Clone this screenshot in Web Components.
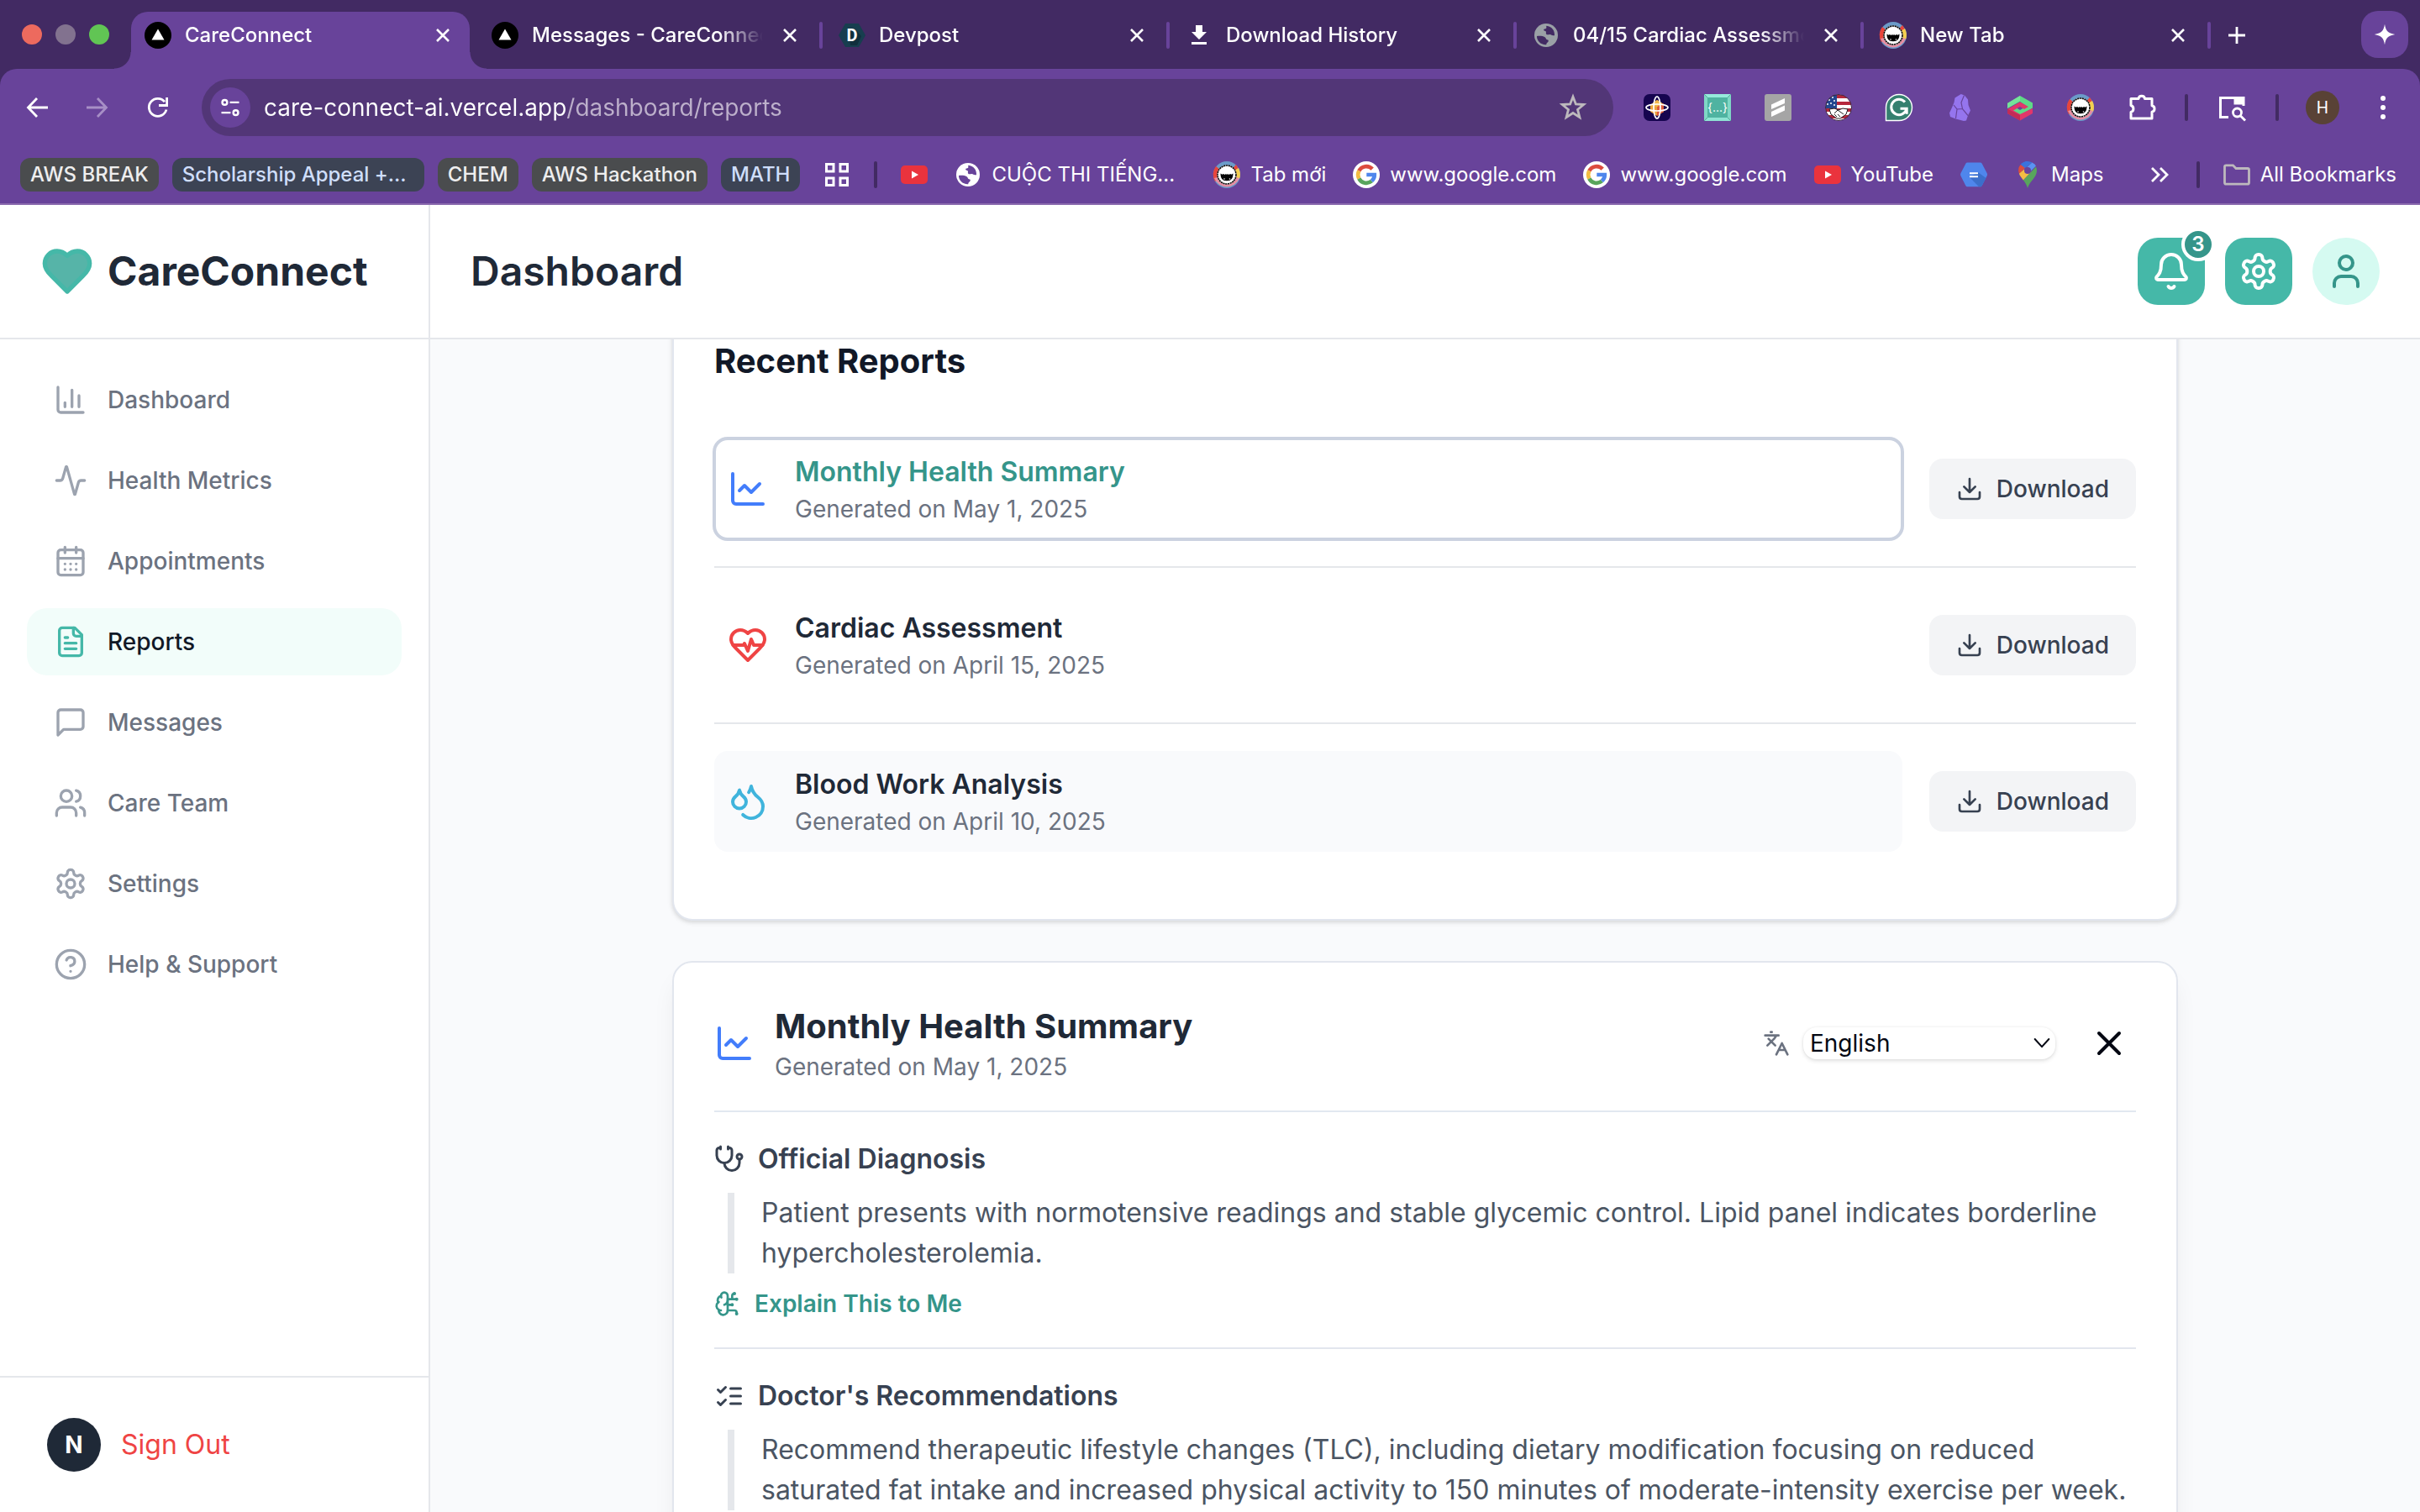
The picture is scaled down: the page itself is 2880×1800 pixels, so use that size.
<!DOCTYPE html>
<html lang="en">
<head>
<meta charset="utf-8">
<title>CareConnect</title>
<style>
  html, body { margin: 0; height: 100%; }
  body {
    display: flex; flex-direction: column; height: 100vh; overflow: hidden;
    font-family: Inter, "Liberation Sans", sans-serif; font-size: 28px; line-height: 40px;
    color: #1f2937; background: #f9fafc;
  }
</style>
</head>
<body>
<browser-chrome></browser-chrome>
<care-app></care-app>

<script>
const G = (body) => ({ vb: '0 0 32 32', body });
const L = (body) => ({ vb: '0 0 24 24', line: true, body });

const face = `
  <circle cx="16" cy="16" r="16" fill="#6b9bc9"/>
  <path d="M16 16 3 6A16 16 0 0 0 2 24Z" fill="#e8453c"/>
  <path d="M16 16 27 4A16 16 0 0 1 30 10Z" fill="#e8453c"/>
  <path d="M16 16 30 8A16 16 0 0 1 31 21Z" fill="#f4cf4f"/>
  <path d="M16 16 31 20A16 16 0 0 1 1 20Z" fill="#e58fa4"/>
  <circle cx="16" cy="16" r="11.500" fill="#fff"/>
  <circle cx="16" cy="16" r="11" fill="#fff" stroke="#0b0b0b" stroke-width="1.600" stroke-dasharray="2.200 .6"/>
  <path d="M8.500 14.500l2 1.200 1.500-.8 1.500 1 1.500-.8 1 .8 1-.8 1.500.8 1.500-1 1.500.8 2-1.200c0 5-1.600 8.800-7.500 8.800s-7.500-3.800-7.500-8.800z" fill="#050505"/>
  <circle cx="13" cy="21" r=".8" fill="#fff"/><circle cx="19.500" cy="21" r=".8" fill="#fff"/>`;
const vercel = `<circle cx="16" cy="16" r="16" fill="#000"/><path d="M16 8.500 23.500 21.500h-15z" fill="#fff"/>`;
const youtube = `<rect y="5" width="32" height="22" rx="5" fill="#ea333d"/><path d="M13 11.500v9l8-4.500z" fill="#fff"/>`;
const google = `
  <circle cx="16" cy="16" r="16" fill="#fff"/>
  <g fill="none" stroke-width="4.600">
    <path d="M7.300 11.400A9.900 9.900 0 0 1 23.200 9.200" stroke="#dc4c3e"/>
    <path d="M7.300 20.600A9.900 9.900 0 0 1 7.300 11.400" stroke="#f3bd42"/>
    <path d="M22.400 23.600A9.900 9.900 0 0 1 7.300 20.600" stroke="#58a55c"/>
    <path d="M16.300 16h9.500A9.900 9.900 0 0 1 22.400 23.600" stroke="#4f86ec"/>
  </g>`;
const globe = (c, h) => `
  <circle cx="16" cy="16" r="14" fill="${c}"/>
  <path d="M5 17c3.500-.6 7-.2 9.500 1.200 1.800 1 1 3 3.500 3.300 1 .2 1 1.700.2 2.500-1.200 1.200-1.700 1.400-2 3.200C9.500 27.500 4.800 22.500 5 17z" fill="${h}"/>
  <path d="M16.500 4.800c-1 1.200.6 1.700-.4 2.900-1 .9-2.800.4-3 1.700-.1 1.600 2 .9 2.700 2.100.6 1.100-.5 2.200.5 3.300 1.300 1.400 3.500-.6 5.200.4 1.500.8 2.500 1.300 4.500 1.100C26.500 10 22.500 5.500 16.500 4.800z" fill="${h}"/>`;

const ICONS = {
  vercel: G(vercel), face: G(face), youtube: G(youtube), google: G(google),
  globeGrey: G(globe('#9aa0a6', '#422a63')), globeWhite: G(globe('#ffffff', '#68439a')),
  devpost: G(`<path d="M8 2h16l8 14-8 14H8L0 16z" fill="#173e4f"/><path d="M12 9h8l7 8-5 11h-8z" fill="#102f3d"/><text x="16" y="23" text-anchor="middle" font-family="Roboto, sans-serif" font-weight="700" font-size="20" fill="#fff">D</text>`),
  saved: G(`<path d="M12 4h8v8h5l-9 9-9-9h5zM7 24h18v3H7z" fill="#fff"/>`),
  close: { vb: '0 0 16 16', body: `<path d="M1 1l14 14M15 1 1 15" fill="none" stroke="#fff" stroke-width="2.600"/>` },
  plus: G(`<path d="M16 6v20M6 16h20" stroke="#fff" stroke-width="2.800"/>`),
  spark: G(`<path d="M16 2c1.500 9 4 12 14 14-10 2-12.500 5-14 14-1.500-9-4-12-14-14 10-2 12.500-5 14-14z" fill="#fff"/>`),
  back: G(`<path d="M29 16H6M16 5 5.500 16 16 27" fill="none" stroke="#fff" stroke-width="2.800"/>`),
  forward: G(`<path d="M3 16h23M16 5l10.500 11L16 27" fill="none" stroke="#a78fc6" stroke-width="2.800"/>`),
  reload: G(`<path d="M26 18.500A10.500 10.500 0 1 1 24 9.200" fill="none" stroke="#fff" stroke-width="2.800"/><path d="M26.600 4v9.500H17" fill="none" stroke="#fff" stroke-width="2.800"/>`),
  tune: G(`<g fill="none" stroke="#fff" stroke-width="2.800"><circle cx="8.500" cy="9" r="3.300"/><path d="M15.500 9H28M4 23h12.500"/><circle cx="23.500" cy="23" r="3.300"/></g>`),
  star: G(`<path d="M16 3.200 19.400 12l9.300.5-7.200 5.900 2.400 9.300-7.900-5.200-7.900 5.200 2.400-9.300-7.200-5.900 9.300-.5z" fill="none" stroke="#bdb9bd" stroke-width="2.800"/>`),
  extAtom: G(`<rect width="32" height="32" rx="7" fill="#16054f"/><path d="M8 13l8-6 8 5v9l-8 5-8-5z" fill="#e9a23b"/><path d="M16 15l8-4v10l-8 5z" fill="#dd5a3c"/><path d="M8 13l8-6 6 4-6 4z" fill="#f2b84b"/><g fill="none" stroke="#fff" stroke-width="1.700"><ellipse cx="16" cy="16" rx="13" ry="4"/><ellipse cx="16" cy="16" rx="4" ry="13"/></g>`),
  extJson: G(`<path d="M0 0h32v32H0z" fill="#7fd8c6"/><path d="M0 0h32l-4 4H4z" fill="#96eadb"/><path d="M0 32h32l-4-4H4z" fill="#8fe4d4"/><path d="M4 4h24v24H4z" fill="#4fb3a1"/><path d="M0 0l4 4M32 0l-4 4M0 32l4-4M32 32l-4-4" stroke="#3f9384" stroke-width=".7"/><text x="16" y="21" text-anchor="middle" font-family="Inter, sans-serif" font-size="14" fill="#fff">{...}</text>`),
  extSlash: G(`<rect width="32" height="32" rx="3" fill="#a5a5a5"/><path d="M8 12.500 24 5v6L8 18zM8 21l16-7.500v6L8 27z" fill="#fff"/>`),
  extFlag: G(`<clipPath id="c"><circle cx="16" cy="16" r="15.500"/></clipPath><g clip-path="url(#c)"><path d="M0 0h32v32H0z" fill="#fff"/><path d="M0 1h32v4H0zM0 9h32v4H0zM0 17h32v4H0zM0 25h32v4H0z" fill="#b5283c"/><path d="M0 0h14v17H0z" fill="#23478f"/><g fill="#fff"><circle cx="5" cy="7" r="1"/><circle cx="9" cy="4" r="1"/><circle cx="11" cy="8" r="1"/><circle cx="7" cy="11" r="1"/><circle cx="3" cy="12" r="1"/><circle cx="11" cy="13" r="1"/></g><path d="M5 18l6-1 5 2 5-2 6 1-2 6-7 5h-4l-7-5z" fill="#fff" stroke="#222" stroke-width="1"/><path d="M11 23l4-4 7 5M14 27l-3-3M18 27l-3-3" fill="none" stroke="#222" stroke-width="1"/></g><circle cx="16" cy="16" r="15.500" fill="none" stroke="#3a2440"/>`),
  extGram: G(`<path d="M.5 31.500V16A15.500 15.500 0 1 1 16 31.500z" fill="#35806f" stroke="#fff" stroke-width="1.400"/><path d="M23 9.500A9.200 9.200 0 1 0 25 17.200h-7.500M25.200 17v6.800" fill="none" stroke="#fff" stroke-width="3"/>`),
  extCrystal: G(`<path d="M17.700 0 22 1.500l4 5 .5 6.500 2.500 6.500-3 6-2 6-3 .5-9.500-2.500L5 27l-1-4.500L7 16l2.500-6 1-5.500z" fill="#9575ee"/><path d="M9 13l4 5-1.500 11M13 18l6.500-.5 6.500 8M19.500 17.500 18 10l3.500-8.500" fill="none" stroke="#68439a" stroke-width="1.200"/>`),
  extHex: G(`<path d="M1 11 16 2l15 8.500v6L16 25 6 19l5-3 5 3 8-4.500L16 9 1 17z" fill="#5fd987"/><path d="M1 11 16 2v6L1 17z" fill="#76e39a"/><path d="M1 18l15-8.500 10 5.500-5 3-5-3-8 4.500L16 24l15-7v6l-15 8.500L1 23z" fill="#e2366a"/><path d="M1 17.500V23l15 8.500V25z" fill="#c32c56"/>`),
  puzzle: G(`<path d="M3 6.500h9a3.800 3.800 0 0 1 7.500 0H28v8.200a3.900 3.900 0 0 1 0 7.600V30H3v-7.500a4.200 4.200 0 0 0 0-8z" transform="translate(1 -1)" fill="none" stroke="#fff" stroke-width="3" stroke-linejoin="round"/>`),
  panel: G(`<path d="M13 28.500H3.500V5.500H31V15" transform="translate(-1 -1)" fill="none" stroke="#fff" stroke-width="3"/><path d="M19 4h12v9H19z" transform="translate(-.5 -.5)" fill="#fff"/><circle cx="22.500" cy="22" r="5" fill="none" stroke="#fff" stroke-width="2.800"/><path d="M26 25.500l6 6" stroke="#fff" stroke-width="2.800"/>`),
  kebab: G(`<g fill="#fff"><circle cx="16" cy="5" r="3"/><circle cx="16" cy="16" r="3"/><circle cx="16" cy="27" r="3"/></g>`),
  apps: G(`<g fill="none" stroke="#fff" stroke-width="3"><path d="M3.500 3.500h8.500v8.500H3.500zM20 3.500h8.500v8.500H20zM3.500 20h8.500v8.500H3.500zM20 20h8.500v8.500H20z"/></g>`),
  cloud: G(`<path d="M8.500 1.500h15c1 0 1.700.4 2.200 1.200l6 11.500c.5 1 .5 2 0 3l-6 11.800c-.5.900-1.200 1.300-2.200 1.300h-15c-1 0-1.700-.4-2.200-1.300L.4 17.200c-.5-1-.5-2 0-3l6-11.500c.4-.800 1.100-1.200 2.100-1.200z" fill="#4f86ec"/><path d="M21 13l9.500 7-4.800 9c-.5.900-1.200 1.300-2.200 1.300H22L11 19z" fill="#3b6fcb"/><path d="M11 14.300h10M11 18.300h10" stroke="#fff" stroke-width="2"/>`),
  maps: G(`<path d="M16 0a11 11 0 0 0-8.400 3.900l5 4.300z" fill="#3a73dd"/><path d="M16 0c-1 0-2 .1-3 .4L9.500 8 12 9l9.500-7.500A11 11 0 0 0 16 0z" fill="#3a73dd"/><path d="M7.600 3.900A11 11 0 0 0 6 15l7-7z" fill="#dc4c3e"/><path d="M21.500 1.500 13 9l5 4.500 8-8a11 11 0 0 0-4.500-4z" fill="#5a93f2"/><path d="M5.900 14.800c.9 2.700 3 5 5 7.700L20 13l-8-3.500z" fill="#f3bd42"/><path d="M26 6.500 10.900 22.500C13 25 15 28 16 32c2-8 11-12.500 11-21 0-1.600-.4-3.200-1-4.500z" fill="#58a55c"/><circle cx="16" cy="11" r="4" fill="#68439a"/>`),
  chevrons: G(`<path d="M7 8l8 8-8 8M17 8l8 8-8 8" fill="none" stroke="#fff" stroke-width="2.800"/>`),
  folder: G(`<path d="M1.500 6.500c0-1 .7-1.700 1.700-1.700h8.300l3.500 3.700h13.800c1 0 1.700.7 1.700 1.700v15.300c0 1-.7 1.700-1.700 1.700H3.200c-1 0-1.700-.7-1.700-1.700z" fill="none" stroke="#bdb9bd" stroke-width="2.800"/>`),

  heart: L(`<path fill="#56b4a8" d="M19 14c1.490-1.460 3-3.210 3-5.500A5.500 5.500 0 0 0 16.500 3c-1.760 0-3 .5-4.500 2-1.500-1.500-2.740-2-4.500-2A5.500 5.500 0 0 0 2 8.500c0 2.300 1.500 4.050 3 5.500l7 7Z"/>`),
  bars: L(`<path d="M3 3v16a2 2 0 0 0 2 2h16M18 17V9M13 17V5M8 17v-3"/>`),
  activity: L(`<path d="M22 12h-2.480a2 2 0 0 0-1.930 1.460l-2.350 8.360a.25.25 0 0 1-.48 0L9.240 2.180a.25.25 0 0 0-.48 0l-2.350 8.360A2 2 0 0 1 4.490 12H2"/>`),
  calendar: L(`<path d="M8 2v4M16 2v4M3 10h18M8 14h.01M12 14h.01M16 14h.01M8 18h.01M12 18h.01M16 18h.01"/><rect width="18" height="18" x="3" y="4" rx="2"/>`),
  file: L(`<path d="M15 2H6a2 2 0 0 0-2 2v16a2 2 0 0 0 2 2h12a2 2 0 0 0 2-2V7Z"/><path d="M14 2v4a2 2 0 0 0 2 2h4M10 9H8M16 13H8M16 17H8"/>`),
  message: L(`<path d="M21 15a2 2 0 0 1-2 2H7l-4 4V5a2 2 0 0 1 2-2h14a2 2 0 0 1 2 2z"/>`),
  users: L(`<path d="M16 21v-2a4 4 0 0 0-4-4H6a4 4 0 0 0-4 4v2"/><circle cx="9" cy="7" r="4"/><path d="M22 21v-2a4 4 0 0 0-3-3.870M16 3.130a4 4 0 0 1 0 7.750"/>`),
  gear: L(`<path d="M12.220 2h-.44a2 2 0 0 0-2 2v.18a2 2 0 0 1-1 1.730l-.43.25a2 2 0 0 1-2 0l-.15-.08a2 2 0 0 0-2.730.73l-.22.38a2 2 0 0 0 .73 2.730l.15.1a2 2 0 0 1 1 1.720v.51a2 2 0 0 1-1 1.740l-.15.09a2 2 0 0 0-.73 2.730l.22.38a2 2 0 0 0 2.730.73l.15-.08a2 2 0 0 1 2 0l.43.25a2 2 0 0 1 1 1.730V20a2 2 0 0 0 2 2h.44a2 2 0 0 0 2-2v-.18a2 2 0 0 1 1-1.730l.43-.25a2 2 0 0 1 2 0l.15.08a2 2 0 0 0 2.730-.73l.22-.39a2 2 0 0 0-.73-2.730l-.15-.08a2 2 0 0 1-1-1.740v-.5a2 2 0 0 1 1-1.740l.15-.09a2 2 0 0 0 .73-2.730l-.22-.38a2 2 0 0 0-2.730-.73l-.15.08a2 2 0 0 1-2 0l-.43-.25a2 2 0 0 1-1-1.730V4a2 2 0 0 0-2-2z"/><circle cx="12" cy="12" r="3"/>`),
  help: L(`<circle cx="12" cy="12" r="10"/><path d="M9.090 9a3 3 0 0 1 5.830 1c0 2-3 3-3 3M12 17h.01"/>`),
  bell: L(`<path d="M10.268 21a2 2 0 0 0 3.464 0M3.262 15.326A1 1 0 0 0 4 17h16a1 1 0 0 0 .74-1.673C19.410 13.956 18 12.499 18 8A6 6 0 0 0 6 8c0 4.499-1.411 5.956-2.738 7.326"/>`),
  user: L(`<path d="M19 21v-2a4 4 0 0 0-4-4H9a4 4 0 0 0-4 4v2"/><circle cx="12" cy="7" r="4"/>`),
  trend: L(`<path d="M3 3v16a2 2 0 0 0 2 2h16"/><path d="m19 9-5 5-4-4-3 3"/>`),
  pulse: L(`<path d="M19 14c1.490-1.460 3-3.210 3-5.500A5.500 5.500 0 0 0 16.500 3c-1.760 0-3 .5-4.500 2-1.500-1.500-2.740-2-4.500-2A5.500 5.500 0 0 0 2 8.500c0 2.300 1.500 4.050 3 5.500l7 7Z"/><path d="M3.220 12H9.500l.5-1 2 4.500 2-7 1.500 3.500h5.270"/>`),
  drops: L(`<path d="M7 16.300c2.200 0 4-1.830 4-4.050 0-1.160-.57-2.260-1.710-3.190S7.290 6.750 7 5.300c-.29 1.450-1.140 2.840-2.290 3.760S3 11.100 3 12.250c0 2.220 1.800 4.050 4 4.050z"/><path d="M12.560 6.600A10.970 10.970 0 0 0 14 3.020c.5 2.500 2 4.900 4 6.500s3 3.500 3 5.500a6.980 6.980 0 0 1-11.910 4.970"/>`),
  download: L(`<path d="M21 15v4a2 2 0 0 1-2 2H5a2 2 0 0 1-2-2v-4"/><path d="m7 10 5 5 5-5M12 15V3"/>`),
  languages: L(`<path d="m5 8 6 6M4 14l6-6 2-3M2 5h12M7 2h1M22 22l-5-10-5 10M14 18h6"/>`),
  x: L(`<path d="M18 6 6 18M6 6l12 12"/>`),
  stethoscope: L(`<path d="M11 2v2M5 2v2M5 3H4a2 2 0 0 0-2 2v4a6 6 0 0 0 12 0V5a2 2 0 0 0-2-2h-1"/><path d="M8 15a6 6 0 0 0 12 0v-3"/><circle cx="20" cy="10" r="2"/>`),
  checks: L(`<path d="m3 17 2 2 4-4M3 7l2 2 4-4M13 6h8M13 12h8M13 18h8"/>`),
  brain: L(`<path d="M12 5a3 3 0 1 0-5.997.125 4 4 0 0 0-2.526 5.770 4 4 0 0 0 .556 6.588A4 4 0 1 0 12 18Z"/><path d="M9 13a4.500 4.500 0 0 0 3-4M6.003 5.125A3 3 0 0 0 6.401 6.500M3.477 10.896a4 4 0 0 1 .585-.396M6 18a4 4 0 0 1-1.967-.516M12 13h4M12 18h6a2 2 0 0 1 2 2v1M12 8h8M16 8V5a2 2 0 0 1 2-2"/><circle cx="16" cy="13" r=".5"/><circle cx="18" cy="3" r=".5"/><circle cx="20" cy="21" r=".5"/><circle cx="20" cy="8" r=".5"/>`),
  caret: L(`<path stroke-width="2.400" d="m2 6 10 11L22 6"/>`)
};

const BASE = `
  * { box-sizing: border-box; }
  a { color: inherit; text-decoration: none; }
  button { font: inherit; color: inherit; background: none; border: 0; padding: 0; margin: 0; cursor: pointer; }
  h1, h2, h3, p, ul { margin: 0; padding: 0; }
`;

function define(name, css, markup, ready) {
  customElements.define(name, class extends HTMLElement {
    constructor() {
      super();
      this.attachShadow({ mode: 'open' });
    }
    connectedCallback() {
      const html = typeof markup === 'function' ? markup(this) : markup;
      this.shadowRoot.innerHTML = `<style>${BASE}${css}</style>${html}`;
      if (ready) ready(this.shadowRoot);
    }
  });
}

define('ui-icon', `
  :host { display: block; flex: none; width: var(--size, 32px); height: var(--size, 32px); }
  svg { display: block; width: 100%; height: 100%; overflow: visible; }
`, (el) => {
  const i = ICONS[el.getAttribute('name')];
  const line = i.line ? 'fill="none" stroke="currentColor" stroke-width="2" stroke-linecap="round" stroke-linejoin="round"' : '';
  return `<svg viewBox="${i.vb}" ${line} aria-hidden="true">${i.body}</svg>`;
});

/* ---------- browser frame ---------- */

define('browser-tab', `
  :host { display: flex; flex: 0 1 413px; min-width: 0; height: 100%; align-items: center; }
  .tab {
    position: relative; display: flex; flex: 1; min-width: 0; align-items: center; height: 100%;
    padding: 0 24px 12px 16px; gap: 16px;
  }
  :host([active]) .tab { background: #68439a; border-radius: 20px 20px 0 0; }
  :host([active]) .tab::before, :host([active]) .tab::after {
    content: ""; position: absolute; bottom: 0; width: 20px; height: 20px;
  }
  :host([active]) .tab::before { left: -20px; background: radial-gradient(circle at 0 0, transparent 19px, #68439a 20px); }
  :host([active]) .tab::after { right: -20px; background: radial-gradient(circle at 100% 0, transparent 19px, #68439a 20px); }
  .title {
    flex: 1; min-width: 0; overflow: hidden; white-space: nowrap; text-align: left; margin-right: 8px;
    mask-image: linear-gradient(to right, #000 calc(100% - 52px), transparent);
  }
  .close ui-icon { --size: 16px; }
  .sep { flex: none; width: 4px; height: 32px; margin: 0 3px 12px; border-radius: 2px; background: #68439a; }
  :host([active]) .sep { background: none; }
`, (el) => `
  <div class="tab" role="tab">
    <ui-icon name="${el.getAttribute('icon')}"></ui-icon>
    <span class="title"><slot></slot></span>
    <button class="close" aria-label="Close tab"><ui-icon name="close"></ui-icon></button>
  </div>
  <span class="sep"></span>`);

define('tab-strip', `
  :host { display: flex; align-items: center; height: 82px; padding: 0 14px 0 26px; background: #422a63; }
  .lights { display: flex; flex: none; gap: 16px; margin-right: 26px; }
  .lights i { width: 24px; height: 24px; border-radius: 50%; }
  .tabs { display: flex; flex: 1; min-width: 0; align-self: flex-end; height: 68px; align-items: center; }
  .new { flex: none; margin: 0 0 12px 12px; }
  .spark { flex: none; display: grid; place-items: center; width: 56px; height: 56px; border-radius: 20px; background: #68439a; }
  .spark ui-icon { --size: 28px; }
`, `
  <div class="lights"><i style="background:#ed6a5e"></i><i style="background:#82728f"></i><i style="background:#61c554"></i></div>
  <div class="tabs" role="tablist">
    <browser-tab icon="vercel" active>CareConnect</browser-tab>
    <browser-tab icon="vercel">Messages - CareConnect</browser-tab>
    <browser-tab icon="devpost">Devpost</browser-tab>
    <browser-tab icon="saved">Download History</browser-tab>
    <browser-tab icon="globeGrey">04/15 Cardiac Assessment</browser-tab>
    <browser-tab icon="face">New Tab</browser-tab>
    <button class="new" aria-label="New tab"><ui-icon name="plus"></ui-icon></button>
  </div>
  <button class="spark" aria-label="Assistant"><ui-icon name="spark"></ui-icon></button>`);

define('browser-toolbar', `
  :host {
    display: flex; align-items: center; gap: 36px; height: 92px; padding: 0 28px;
    background: #68439a; border-radius: 20px 20px 0 0;
  }
  .group { display: flex; flex: none; gap: 40px; }
  .omnibox {
    display: flex; flex: 1; min-width: 0; align-items: center; gap: 16px; height: 68px;
    padding: 0 32px 0 10px; border-radius: 34px; background: #523677;
  }
  .site { display: grid; flex: none; place-items: center; width: 48px; height: 48px; border-radius: 50%; background: #68439a; }
  .site ui-icon { --size: 28px; }
  .url {
    flex: 1; min-width: 0; height: 40px; padding: 0; border: 0; outline: none; font: inherit; font-size: 28px; line-height: 40px;
    color: transparent; background: linear-gradient(to right, #fff var(--host-width, 100%), #bdb0cb var(--host-width, 100%));
    -webkit-background-clip: text; background-clip: text;
  }
  .sep { flex: none; width: 4px; height: 32px; border-radius: 2px; background: #422a63; }
  .avatar { flex: none; display: grid; place-items: center; width: 40px; height: 40px; margin-left: -4px; border-radius: 50%; background: #594236; font: 400 20px/24px Roboto, sans-serif; }
`, `
  <div class="group">
    <button aria-label="Back"><ui-icon name="back"></ui-icon></button>
    <button aria-label="Forward"><ui-icon name="forward"></ui-icon></button>
    <button aria-label="Reload"><ui-icon name="reload"></ui-icon></button>
  </div>
  <div class="omnibox">
    <button class="site" aria-label="View site information"><ui-icon name="tune"></ui-icon></button>
    <input class="url" type="text" spellcheck="false" aria-label="Address and search bar" value="care-connect-ai.vercel.app/dashboard/reports">
    <button aria-label="Bookmark this tab"><ui-icon name="star"></ui-icon></button>
  </div>
  <div class="group">
    ${['extAtom', 'extJson', 'extSlash', 'extFlag', 'extGram', 'extCrystal', 'extHex', 'face', 'puzzle']
      .map((n) => `<button aria-label="Extension"><ui-icon name="${n}"></ui-icon></button>`).join('')}
  </div>
  <span class="sep"></span>
  <button aria-label="Side panel"><ui-icon name="panel"></ui-icon></button>
  <span class="sep"></span>
  <button class="avatar" aria-label="Profile">H</button>
  <button aria-label="Menu"><ui-icon name="kebab"></ui-icon></button>`,
(root) => {
  /* The host part of the address is bright, the path is dimmed. */
  const url = root.querySelector('.url');
  const ctx = document.createElement('canvas').getContext('2d');
  ctx.font = '400 28px Inter, "Liberation Sans", sans-serif';
  url.style.setProperty('--host-width', Math.round(ctx.measureText(url.value.split('/')[0]).width) + 'px');
});

define('tab-group', `
  :host { display: block; flex: none; }
  button { display: block; width: 100%; height: 40px; padding: 0 12px; border-radius: 12px; line-height: 40px; text-align: left; white-space: nowrap; background: #4a4c4e; color: #eeeeee; }
  :host([blue]) button { background: #3c4354; color: #cfdefb; }
`, `<button><slot></slot></button>`);

define('bookmark-link', `
  :host { display: block; flex: none; font-weight: 400; }
  a { display: flex; align-items: center; gap: 12px; white-space: nowrap; }
`, (el) => `<a href="#"><ui-icon name="${el.getAttribute('icon')}"></ui-icon><slot></slot></a>`);

define('bookmarks-bar', `
  :host {
    display: flex; align-items: center; gap: 28px; height: 70px; padding: 0 28px 0 24px;
    background: #68439a; border-bottom: 2px solid #8a6aae;
  }
  .groups { display: flex; gap: 16px; }
  .links { display: flex; flex: 1; gap: 32px; }
  .sep { flex: none; width: 4px; height: 32px; border-radius: 2px; background: #422a63; }
  .wide { width: 300px; }
  .long { width: 276px; }
`, `
  <div class="groups">
    <tab-group>AWS BREAK</tab-group>
    <tab-group class="wide" blue>Scholarship Appeal +...</tab-group>
    <tab-group>CHEM</tab-group>
    <tab-group>AWS Hackathon</tab-group>
    <tab-group blue>MATH</tab-group>
  </div>
  <button aria-label="Apps"><ui-icon name="apps"></ui-icon></button>
  <span class="sep"></span>
  <div class="links">
    <bookmark-link icon="youtube"></bookmark-link>
    <bookmark-link class="long" icon="globeWhite">CUỘC THI TIẾNG...</bookmark-link>
    <bookmark-link icon="face">Tab mới</bookmark-link>
    <bookmark-link icon="google">www.google.com</bookmark-link>
    <bookmark-link icon="google">www.google.com</bookmark-link>
    <bookmark-link icon="youtube">YouTube</bookmark-link>
    <bookmark-link icon="cloud"></bookmark-link>
    <bookmark-link icon="maps">Maps</bookmark-link>
  </div>
  <button aria-label="More bookmarks"><ui-icon name="chevrons"></ui-icon></button>
  <span class="sep"></span>
  <bookmark-link icon="folder">All Bookmarks</bookmark-link>`);

define('browser-chrome', `
  :host { display: block; flex: none; background: #422a63; color: #fff; font-size: 24px; line-height: 32px; font-weight: 500; }
  browser-toolbar { font-weight: 400; }
`, `<tab-strip></tab-strip><browser-toolbar></browser-toolbar><bookmarks-bar></bookmarks-bar>`);

/* ---------- application ---------- */

define('nav-item', `
  :host { display: block; color: #6b7280; font-weight: 500; }
  a { display: flex; align-items: center; gap: 24px; padding: 20px 32px; border-radius: 24px; }
  ui-icon { --size: 40px; color: #9ca3af; }
  :host([active]) a { background: #f2fdfa; color: #111827; }
  :host([active]) ui-icon { color: #45b8a8; }
`, (el) => `<a href="#"><ui-icon name="${el.getAttribute('icon')}"></ui-icon><slot></slot></a>`);

define('side-bar', `
  :host { display: flex; flex-direction: column; flex: none; width: 512px; background: #fff; border-right: 2px solid #e5e7eb; }
  .brand { display: flex; align-items: center; gap: 16px; height: 160px; padding: 0 48px; border-bottom: 2px solid #e5e7eb; font-size: 48px; line-height: 64px; font-weight: 700; }
  .brand ui-icon { --size: 64px; color: #45b8a8; }
  nav { display: flex; flex: 1; flex-direction: column; gap: 16px; padding: 32px; }
  .account { display: flex; align-items: center; gap: 24px; height: 162px; padding: 0 56px; border-top: 2px solid #e5e7eb; }
  .initial { display: grid; place-items: center; width: 64px; height: 64px; border-radius: 50%; background: #1f2937; color: #fff; font-weight: 700; }
  .out { font-size: 32px; line-height: 48px; color: #ef4444; }
`, `
  <div class="brand"><ui-icon name="heart"></ui-icon><span>CareConnect</span></div>
  <nav>
    <nav-item icon="bars">Dashboard</nav-item>
    <nav-item icon="activity">Health Metrics</nav-item>
    <nav-item icon="calendar">Appointments</nav-item>
    <nav-item icon="file" active>Reports</nav-item>
    <nav-item icon="message">Messages</nav-item>
    <nav-item icon="users">Care Team</nav-item>
    <nav-item icon="gear">Settings</nav-item>
    <nav-item icon="help">Help &amp; Support</nav-item>
  </nav>
  <div class="account"><span class="initial">N</span><button class="out">Sign Out</button></div>`);

define('app-header', `
  :host { display: flex; flex: none; align-items: center; gap: 24px; height: 160px; padding: 0 48px; background: #fff; border-bottom: 2px solid #e5e7eb; }
  h1 { flex: 1; font-size: 48px; line-height: 64px; font-weight: 600; }
  button { position: relative; display: grid; place-items: center; width: 80px; height: 80px; border-radius: 24px; background: #45b8a8; color: #fff; }
  button.user { border-radius: 50%; background: #d5faf1; color: #35958a; }
  ui-icon { --size: 48px; }
  .badge { position: absolute; top: -12px; right: -12px; width: 40px; height: 40px; border: 4px solid #fff; border-radius: 50%; background: #35958a; font-size: 24px; line-height: 32px; font-weight: 600; text-align: center; }
`, `
  <h1>Dashboard</h1>
  <button aria-label="Notifications"><ui-icon name="bell"></ui-icon><span class="badge">3</span></button>
  <button aria-label="Settings"><ui-icon name="gear"></ui-icon></button>
  <button class="user" aria-label="Account"><ui-icon name="user"></ui-icon></button>`);

define('app-card', `
  :host { display: block; padding: 48px; background: #fff; border: 2px solid #e2e6ee; border-radius: 24px; box-shadow: 0 2px 6px rgba(0, 0, 0, .1), 0 2px 4px rgba(0, 0, 0, .06); }
  :host([raised]) { box-shadow: 0 20px 30px -6px rgba(0, 0, 0, .08), 0 8px 12px -8px rgba(0, 0, 0, .08); }
`, `<slot></slot>`);

define('report-row', `
  :host { display: flex; align-items: center; gap: 32px; padding: 32px 0; border-bottom: 2px solid #e5e7eb; }
  :host(:last-of-type) { border-bottom: 0; }
  .open { display: flex; flex: 1; align-items: center; gap: 32px; padding: 16px; border-radius: 16px; text-align: left; }
  :host([selected]) .open { outline: 4px solid #cbd2e0; outline-offset: -2px; }
  :host([hovered]) .open { background: #f9fafc; }
  .open ui-icon { --size: 48px; color: var(--tint); }
  .text { display: flex; flex-direction: column; }
  .name { font-size: 32px; line-height: 48px; font-weight: 600; color: #1f2937; }
  :host([selected]) .name { color: #35958a; }
  .date { color: #6b7280; }
  .download { display: flex; flex: none; align-items: center; gap: 16px; padding: 16px 32px; border-radius: 16px; background: #f3f4f6; color: #374151; font-weight: 500; }
`, (el) => `
  <button class="open" style="--tint:${el.getAttribute('tint')}">
    <ui-icon name="${el.getAttribute('icon')}"></ui-icon>
    <span class="text"><span class="name"><slot></slot></span><span class="date">Generated on ${el.getAttribute('date')}</span></span>
  </button>
  <button class="download"><ui-icon name="download"></ui-icon><span>Download</span></button>`);

define('report-section', `
  :host { display: block; padding: 32px 0; border-bottom: 2px solid #e2e6ee; }
  h3 { display: flex; align-items: center; gap: 16px; font-size: 32px; line-height: 48px; font-weight: 600; color: #374151; }
  h3 ui-icon { --size: 36px; }
  p { margin: 16px 0 16px 16px; padding-left: 32px; border-left: 8px solid #e5e7eb; font-size: 32px; line-height: 48px; color: #4b5563; }
  button { display: flex; align-items: center; gap: 16px; font-weight: 600; color: #35958a; }
`, (el) => `
  <h3><ui-icon name="${el.getAttribute('icon')}"></ui-icon><span>${el.getAttribute('heading')}</span></h3>
  <p><slot></slot></p>
  ${el.hasAttribute('explain') ? '<button><ui-icon name="brain"></ui-icon><span>Explain This to Me</span></button>' : ''}`);

define('report-head', `
  :host { display: flex; align-items: center; gap: 24px; padding-bottom: 32px; border-bottom: 2px solid #e2e8f0; }
  .kind { --size: 48px; color: #437dfb; }
  .text { flex: 1; }
  h2 { font-size: 40px; line-height: 56px; font-weight: 700; }
  p { color: #6b7280; }
  label { display: flex; align-items: center; gap: 16px; color: #6b7280; }
  .pick { display: grid; width: 300px; align-items: center; justify-items: end; }
  select, .pick ui-icon { grid-area: 1 / 1; }
  select {
    appearance: none; width: 100%; height: 38px; padding: 0 8px; border: 0; border-radius: 16px; background: #fff;
    font: inherit; line-height: 38px; color: #030712; box-shadow: 0 2px 5px rgba(0, 0, 0, .12), 0 0 3px rgba(0, 0, 0, .06);
  }
  .pick ui-icon { --size: 20px; margin-right: 6px; color: #030712; pointer-events: none; }
  .close { padding: 8px; color: #030712; margin-left: 8px; }
  .close ui-icon { --size: 48px; }
`, `
  <ui-icon class="kind" name="trend"></ui-icon>
  <div class="text"><h2>Monthly Health Summary</h2><p>Generated on May 1, 2025</p></div>
  <label><ui-icon name="languages"></ui-icon>
    <span class="pick"><select aria-label="Language"><option>English</option><option>Tiếng Việt</option></select><ui-icon name="caret"></ui-icon></span>
  </label>
  <button class="close" aria-label="Close report"><ui-icon name="x"></ui-icon></button>`);

define('reports-page', `
  :host { display: block; flex: 1; min-height: 0; overflow: hidden; background: #f9fafc; }
  .column { display: flex; flex-direction: column; gap: 48px; max-width: 1792px; margin: -52px auto 0; }
  h2 { margin-bottom: 32px; font-size: 40px; line-height: 56px; font-weight: 700; color: #111827; }
`, `
  <div class="column">
    <app-card>
      <h2>Recent Reports</h2>
      <report-row icon="trend" tint="#437dfb" date="May 1, 2025" selected>Monthly Health Summary</report-row>
      <report-row icon="pulse" tint="#ef4444" date="April 15, 2025">Cardiac Assessment</report-row>
      <report-row icon="drops" tint="#40b4dc" date="April 10, 2025" hovered>Blood Work Analysis</report-row>
    </app-card>
    <app-card raised>
      <report-head></report-head>
      <report-section icon="stethoscope" heading="Official Diagnosis" explain>Patient presents with normotensive readings and stable glycemic control. Lipid panel indicates borderline hypercholesterolemia.</report-section>
      <report-section icon="checks" heading="Doctor's Recommendations">Recommend therapeutic lifestyle changes (TLC), including dietary modification focusing on reduced saturated fat intake and increased physical activity to 150 minutes of moderate-intensity exercise per week.</report-section>
    </app-card>
  </div>`);

define('care-app', `
  :host { display: flex; flex: 1; min-height: 0; }
  main { display: flex; flex: 1; flex-direction: column; min-width: 0; }
`, `<side-bar></side-bar><main><app-header></app-header><reports-page></reports-page></main>`);
</script>
</body>
</html>
